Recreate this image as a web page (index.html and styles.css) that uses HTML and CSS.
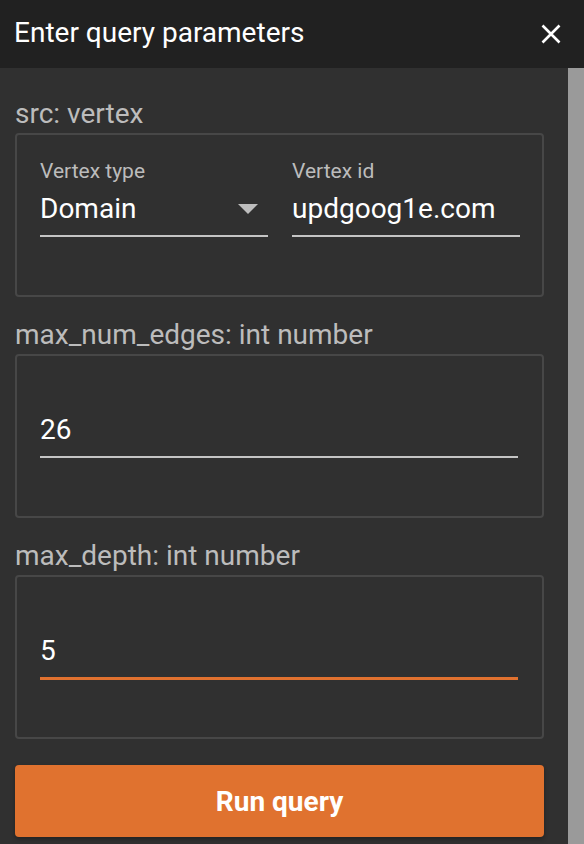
FILE: index.html
```html
<!DOCTYPE html>
<html>
<head>
<meta charset="utf-8">
<link rel="stylesheet" href="styles.css">
</head>
<body>
<div class="dialog">
  <header class="header">
    <h1 class="title">Enter query parameters</h1>
    <svg class="close" width="20" height="20" viewBox="0 0 20 20"><path d="M1.5 1.5 L18.5 18.5 M18.5 1.5 L1.5 18.5" stroke="#fff" stroke-width="2.6" fill="none"/></svg>
  </header>
  <div class="main">
    <div class="content">
      <div class="param-label">src: vertex</div>
      <div class="box">
        <div class="row">
          <div class="field">
            <div class="field-label">Vertex type</div>
            <div class="field-input">
              <span class="value">Domain</span>
              <svg class="caret" width="20" height="10" viewBox="0 0 20 10"><polygon points="0,0 20,0 10,10" fill="#bdbdbd"/></svg>
            </div>
          </div>
          <div class="field">
            <div class="field-label">Vertex id</div>
            <div class="field-input"><span class="value">updgoog1e.com</span></div>
          </div>
        </div>
      </div>
      <div class="param-label">max_num_edges: int number</div>
      <div class="box">
        <div class="field narrow">
          <div class="field-label"></div>
          <div class="field-input"><span class="value">26</span></div>
        </div>
      </div>
      <div class="param-label">max_depth: int number</div>
      <div class="box">
        <div class="field narrow focused">
          <div class="field-label"></div>
          <div class="field-input"><span class="value">5</span></div>
        </div>
      </div>
      <button class="run">Run query</button>
    </div>
    <div class="scrollbar"></div>
  </div>
</div>
</body>
</html>
```

FILE: styles.css
```css
* { box-sizing: border-box; }
html, body {
  margin: 0;
  padding: 0;
  width: 584px;
  height: 844px;
  overflow: hidden;
  background: #303030;
  font-family: Roboto, "Liberation Sans", sans-serif;
}
.dialog {
  display: flex;
  flex-direction: column;
  height: 844px;
}
.header {
  height: 68px;
  flex: 0 0 68px;
  background: #212121;
  display: flex;
  align-items: center;
  justify-content: space-between;
  padding: 0 23px 0 14px;
}
.title {
  margin: 0 0 3px 0;
  font-size: 28px;
  line-height: 32px;
  font-weight: 400;
  color: #ffffff;
}
.close { display: block; }
.main {
  flex: 1;
  display: flex;
  min-height: 0;
}
.content {
  flex: 1;
  padding: 30px 24px 0 15px;
}
.scrollbar {
  width: 16px;
  flex: 0 0 16px;
  background: #9a9a9a;
}
.param-label {
  font-size: 28px;
  line-height: 32px;
  color: #bcbcbc;
  margin-bottom: 3px;
}
.box {
  border: 2px solid #474747;
  border-radius: 4px;
  padding: 24px 22px 58px 23px;
  margin-bottom: 22px;
}
.row {
  display: grid;
  grid-template-columns: 1fr 1fr;
  column-gap: 24px;
}
.field-label {
  font-size: 21px;
  line-height: 24px;
  height: 24px;
  color: #bcbcbc;
}
.field-input {
  margin-top: 10px;
  padding-bottom: 10px;
  border-bottom: 2px solid #c4c4c4;
  display: flex;
  align-items: center;
  justify-content: space-between;
}
.value {
  font-size: 28px;
  line-height: 32px;
  color: #ffffff;
}
.caret { margin-right: 10px; display: block; }
.narrow { margin-right: 2px; }
.focused .field-input {
  border-bottom: 3px solid #e0712f;
}
.focused { margin-bottom: -1px; }
.run {
  display: block;
  width: 100%;
  height: 72px;
  margin-top: 26px;
  border: none;
  border-radius: 4px;
  background: #e0722f;
  color: #ffffff;
  font-family: Roboto, "Liberation Sans", sans-serif;
  font-size: 28px;
  font-weight: 700;
  box-shadow: 0 2px 4px rgba(0,0,0,0.3);
}
```
